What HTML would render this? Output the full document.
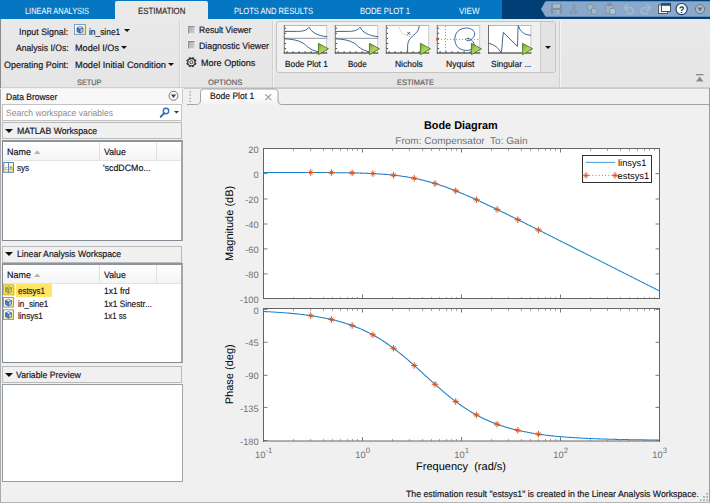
<!DOCTYPE html>
<html lang="en"><head><meta charset="utf-8"><title>Linear Analysis Tool - Bode Plot 1</title>
<style>
html,body{margin:0;padding:0;background:#f0f0f0;}
body{width:710px;height:503px;overflow:hidden;font-family:"Liberation Sans",Arial,sans-serif;}
#root{text-rendering:geometricPrecision;position:relative;width:710px;height:503px;overflow:hidden;background:#f0f0f0;}
#root div,#root svg,#root span{position:absolute;box-sizing:border-box;}
.t{white-space:nowrap;display:block;transform-origin:0 50%;-webkit-text-stroke:0.17px currentColor;}
/* ---- toolstrip tab bar ---- */
#tabbar{left:0;top:0;width:710px;height:19px;background:#0576c1;}
#tabdark{left:502px;top:0;width:208px;height:19px;background:#003e75;}
#tabactive{left:115px;top:1px;width:93px;height:19px;background:#e9e9e9;border-radius:2px 2px 0 0;}
/* ---- toolstrip body ---- */
#strip{left:0;top:19px;width:710px;height:69px;background:linear-gradient(#e9e9e9,#e5e5e5);border-bottom:1px solid #cfcfcf;box-shadow:0 1px 0 #cbcbcb;}
#stripedge{left:0;top:19px;width:1px;height:69px;background:#8a8a8a;}
.vsep{width:1px;top:21px;height:66px;background:#d0d0d0;box-shadow:1px 0 0 #f6f6f6;}
#gallery{left:276px;top:21px;width:280px;height:51.5px;border:1px solid #c4c4c4;border-radius:3px;background:#f0f0f0;}
#gallerydd{left:540px;top:22px;width:15px;height:49.5px;background:#e3e3e3;border-left:1px solid #cdcdcd;border-radius:0 2px 2px 0;}
.chk{width:7.6px;height:7.6px;background:linear-gradient(135deg,#b0b0b0,#cfcfcf);border-top:1px solid #8b8b8b;border-left:1px solid #909090;border-right:1px solid #d9d9d9;border-bottom:1px solid #dedede;box-shadow:0 0 0 0.6px #f2f2f2;}
.arrow{width:0;height:0;border-left:3px solid transparent;border-right:3px solid transparent;border-top:3px solid #111;}
/* ---- data browser ---- */
#browser{left:0;top:88px;width:184px;height:415px;background:#f0f0f0;}
#dbhead{left:1px;top:88.6px;width:181.5px;height:15px;background:#f8f8f8;border-right:1px solid #c9c9c9;}
#search{left:2px;top:103.6px;width:180px;height:17.6px;background:#fff;border:1px solid #c3c3c3;}
.sechead{left:2px;width:180px;height:17px;background:#f0f0f0;border:1px solid #b9b9b9;}
.tri{width:0;height:0;border-left:4.5px solid transparent;border-right:4.5px solid transparent;border-top:4.5px solid #111;}
.panel{left:2px;width:181px;background:#fff;border:1px solid #828a94;border-top:2px solid #8e949c;border-right:2px solid #a2a6ac;}
.colhead{left:0;top:0;width:178px;height:19px;background:linear-gradient(#ffffff,#f4f4f4);border-bottom:1px solid #e3e3e3;}
.colsep{top:0;width:1px;height:19px;background:#e0e0e0;}
.sorttri{width:0;height:0;border-left:3.5px solid transparent;border-right:3.5px solid transparent;border-bottom:3.5px solid #a8a8a8;}
/* ---- document area ---- */
#docright{left:709px;top:88px;width:1px;height:415px;background:#9c9c9c;}
#leftedge{left:0;top:89px;width:1px;height:414px;background:#aaaaaa;}
#bottomedge{left:0;top:502px;width:710px;height:1px;background:#b4b4b4;}

</style></head><body>
<div id="root">
<!-- toolstrip tab bar -->
<div id="tabbar"></div>
<div id="tabdark"></div>
<div id="tabactive"></div>
<!-- toolstrip body -->
<div id="strip"></div>
<div id="stripedge"></div>
<div class="vsep" style="left:179px"></div>
<div class="vsep" style="left:272px"></div>
<div class="vsep" style="left:559px"></div>
<div id="gallery"></div>
<div id="gallerydd"></div>
<div class="arrow" style="left:123.5px;top:29px"></div>
<div class="arrow" style="left:121px;top:45.5px"></div>
<div class="arrow" style="left:168px;top:63px"></div>
<div class="arrow" style="left:545px;top:45.5px"></div>
<div class="chk" style="left:187.6px;top:26.3px"></div>
<div class="chk" style="left:187.6px;top:41.1px"></div>
<!-- data browser -->
<div id="browser"></div>
<div id="leftedge"></div>
<div id="dbhead"></div>
<div id="search"></div>
<div class="sechead" style="top:122px"></div>
<div class="tri" style="left:5px;top:129px"></div>
<div class="panel" style="top:140px;height:101px">
  <div class="colhead"></div><div class="colsep" style="left:96.3px"></div><div class="colsep" style="left:152.5px"></div>
</div>
<div class="sechead" style="top:245.5px"></div>
<div class="tri" style="left:5px;top:252px"></div>
<div class="panel" style="top:263px;height:100px">
  <div class="colhead"></div><div class="colsep" style="left:96.3px"></div><div class="colsep" style="left:152.5px"></div>
  <div style="left:0.5px;top:19.5px;width:11px;height:11px;background:#ffe566"></div>
  <div style="left:13.2px;top:19.3px;width:35.8px;height:12.4px;background:#ffe566"></div>
</div>
<div class="sechead" style="top:366px"></div>
<div class="tri" style="left:5px;top:373px"></div>
<div class="panel" style="top:384px;height:98px;border:1px solid #969ca4;border-right:1px solid #a2a6ac"></div>
<!-- document area -->
<div id="docright"></div>
<div id="bottomedge"></div>

<svg id="icons" width="710" height="503" viewBox="0 0 710 503" style="left:0;top:0" font-family="'Liberation Sans', Arial, sans-serif">
<defs>
<linearGradient id="gy" x1="0" y1="0" x2="1" y2="1"><stop offset="0" stop-color="#ffffff"/><stop offset="0.4" stop-color="#fff9d6"/><stop offset="1" stop-color="#ffdc55"/></linearGradient>
<linearGradient id="gplay" x1="0" y1="0" x2="1" y2="1"><stop offset="0" stop-color="#6f9f2a"/><stop offset="0.5" stop-color="#b4d465"/><stop offset="1" stop-color="#8dbb3c"/></linearGradient>
<linearGradient id="gchk" x1="0" y1="0" x2="1" y2="1"><stop offset="0" stop-color="#b4b4b4"/><stop offset="1" stop-color="#d8d8d8"/></linearGradient>
</defs>
<g id="qab">
<path d="M541 9L545.5 1.3H710V16.7H545.5Z" fill="#8aa8c9"/>
<g fill="#8292a3"><rect x="551" y="3.5" width="11" height="10.5" rx="0.8"/><rect x="553" y="4.3" width="7" height="3.6" fill="#a9bccf"/><rect x="553.3" y="10" width="6.4" height="4" fill="#9fb3c8"/><rect x="554.3" y="10.8" width="1.6" height="2.4" fill="#8292a3"/></g>
<g stroke="#8292a3" stroke-width="1" fill="none"><path d="M576.5 4L571.5 11.5M573 4L575.5 11"/><circle cx="571" cy="12.6" r="1.4"/><circle cx="576" cy="12.6" r="1.4"/></g>
<g fill="#a4b7cb" stroke="#8292a3" stroke-width="0.9"><path d="M587.5 4.5h4.2l1.3 1.3v4.2h-5.5z"/><path d="M591.5 8.5h4.2l1.3 1.3v4.2h-5.5z"/></g>
<g fill="#9db0c5" stroke="#8292a3" stroke-width="0.9"><rect x="605.5" y="4.8" width="8" height="8.7" rx="0.8"/><rect x="607.7" y="3.6" width="3.6" height="2.2" fill="#8292a3"/><path d="M610 8.5h4.2l1.3 1.3v4.4h-5.5z" fill="#b4c4d6"/></g>
<g fill="none" stroke="#a5b8cc" stroke-width="1.6" stroke-linecap="round" stroke-linejoin="round"><path d="M627.5 4.5L624 7.7L627.5 10.8M624.3 7.7H630.5a3 3 0 0 1 0 6H627"/><path d="M647 4.5L650.5 7.7L647 10.8M650.2 7.7H644a3 3 0 0 0 0 6H647.5"/></g>
<g><rect x="658.5" y="5" width="9" height="8.5" fill="#eeeeee" stroke="#4d4d4d" stroke-width="0.9"/><rect x="661.5" y="3.5" width="9" height="8" fill="#fafafa" stroke="#3c3c3c" stroke-width="0.9"/><rect x="661.9" y="3.9" width="8.2" height="1.9" fill="#1f4e8c"/></g>
<g><circle cx="681.6" cy="9.1" r="5.6" fill="#ffffff" stroke="#1d3f73" stroke-width="1.2"/><text x="681.6" y="12.6" font-size="9.5" font-weight="bold" fill="#16305c" text-anchor="middle">?</text></g>
<g><circle cx="700" cy="9.1" r="4.6" fill="#a9bdd2" stroke="#6d7781" stroke-width="1"/><path d="M697.3 7.6h5.4L700 11.6z" fill="#666e77"/></g>
</g>
<rect x="74.50" y="24.60" width="11.00" height="9.80" fill="url(#gy)" stroke="#6b94cb" stroke-width="0.9"/><path d="M77.00 27.80l3 -1.3l3 1.3l-3 1.4z" fill="#f6faff" stroke="#2c57a4" stroke-width="0.7" stroke-linejoin="round"/><path d="M77.00 27.80l3 1.4v3.9l-3 -1.4z" fill="#4d7ccb" stroke="#2c57a4" stroke-width="0.7" stroke-linejoin="round"/><path d="M80.00 29.20l3 -1.4v3.9l-3 1.4z" fill="#a9c9f5" stroke="#2c57a4" stroke-width="0.7" stroke-linejoin="round"/>
<path d="M195.00 63.69L196.16 64.17M192.89 65.80L193.37 66.96M189.91 65.80L189.43 66.96M187.80 63.69L186.64 64.17M187.80 60.71L186.64 60.23M189.91 58.60L189.43 57.44M192.89 58.60L193.37 57.44M195.00 60.71L196.16 60.23" stroke="#303030" stroke-width="1.9" fill="none"/><circle cx="191.40" cy="62.20" r="3.7" fill="#f6f6f6" stroke="#2c2c2c" stroke-width="1.3"/><circle cx="191.40" cy="62.20" r="1.6" fill="#dcdcdc" stroke="#3a3a3a" stroke-width="0.9"/>
<g fill="#8a8a8a"><rect x="696" y="74" width="7.5" height="1.3"/><path d="M696 81.5h7.5L699.75 76.6z"/></g>
<rect x="283.80" y="25.00" width="43.40" height="28.40" fill="#fff"/><path d="M283.80 25.50H327.20" stroke="#b8b8b8" stroke-width="1"/><path d="M326.70 25.00V53.40" stroke="#c8c8c8" stroke-width="1"/><path d="M284.30 25.00V53.40" stroke="#6e6e6e" stroke-width="1"/><path d="M283.80 53.00H327.20" stroke="#1a1a1a" stroke-width="1.2"/><path d="M287.10 52.80v-1.6M293.10 52.80v-1.6M299.10 52.80v-1.6M305.10 52.80v-1.6M311.10 52.80v-1.6M317.10 52.80v-1.6M323.10 52.80v-1.6M284.60 28.20h1.5M284.60 33.30h1.5M284.60 38.40h1.5M284.60 43.50h1.5M284.60 48.60h1.5" stroke="#333" stroke-width="0.9"/>
<path d="M283.80 38.3H327.20" stroke="#8a8a8a" stroke-width="0.9"/>
<path d="M284.40 31.4h12c6 0 10 -0.6 12.7 -4.2c2 4.6 8 8.8 18.2 9.4" fill="none" stroke="#3e6491" stroke-width="1" />
<path d="M284.40 38.8c8 0.4 14 1.4 18.5 4.2c5 3.4 7 7.2 15 8.6" fill="none" stroke="#3e6491" stroke-width="1" />
<path d="M318.40 43.30v11.4l10 -5.9z" fill="url(#gplay)" stroke="#4a7a1e" stroke-width="0.9" stroke-linejoin="round"/>
<rect x="334.80" y="25.00" width="43.40" height="28.40" fill="#fff"/><path d="M334.80 25.50H378.20" stroke="#b8b8b8" stroke-width="1"/><path d="M377.70 25.00V53.40" stroke="#c8c8c8" stroke-width="1"/><path d="M335.30 25.00V53.40" stroke="#6e6e6e" stroke-width="1"/><path d="M334.80 53.00H378.20" stroke="#1a1a1a" stroke-width="1.2"/><path d="M338.10 52.80v-1.6M344.10 52.80v-1.6M350.10 52.80v-1.6M356.10 52.80v-1.6M362.10 52.80v-1.6M368.10 52.80v-1.6M374.10 52.80v-1.6M335.60 28.20h1.5M335.60 33.30h1.5M335.60 38.40h1.5M335.60 43.50h1.5M335.60 48.60h1.5" stroke="#333" stroke-width="0.9"/>
<path d="M334.80 38.3H378.20" stroke="#8a8a8a" stroke-width="0.9"/>
<path d="M335.40 31.4h12c6 0 10 -0.6 12.7 -4.2c2 4.6 8 8.8 18.2 9.4" fill="none" stroke="#3e6491" stroke-width="1" />
<path d="M335.40 38.8c8 0.4 14 1.4 18.5 4.2c5 3.4 7 7.2 15 8.6" fill="none" stroke="#3e6491" stroke-width="1" />
<path d="M369.40 43.30v11.4l10 -5.9z" fill="url(#gplay)" stroke="#4a7a1e" stroke-width="0.9" stroke-linejoin="round"/>
<rect x="385.80" y="25.00" width="43.40" height="28.40" fill="#fff"/><path d="M385.80 25.50H429.20" stroke="#b8b8b8" stroke-width="1"/><path d="M428.70 25.00V53.40" stroke="#c8c8c8" stroke-width="1"/><path d="M386.30 25.00V53.40" stroke="#6e6e6e" stroke-width="1"/><path d="M385.80 53.00H429.20" stroke="#1a1a1a" stroke-width="1.2"/><path d="M389.10 52.80v-1.6M395.10 52.80v-1.6M401.10 52.80v-1.6M407.10 52.80v-1.6M413.10 52.80v-1.6M419.10 52.80v-1.6M425.10 52.80v-1.6M386.60 28.20h1.5M386.60 33.30h1.5M386.60 38.40h1.5M386.60 43.50h1.5M386.60 48.60h1.5" stroke="#333" stroke-width="0.9"/>
<path d="M399 27.5c1.2 5 6 9 13 9.2" fill="none" stroke="#9a9a9a" stroke-width="0.9" stroke-dasharray="1.2 1.6"/>
<path d="M407.3 31.9l2.9 2.9M410.2 31.9l-2.9 2.9" stroke="#2d4f7c" stroke-width="0.9"/>
<path d="M419.2 25.8c0 9 -11.6 10 -11.6 20v6.6" fill="none" stroke="#3e6491" stroke-width="1" />
<path d="M420.40 43.30v11.4l10 -5.9z" fill="url(#gplay)" stroke="#4a7a1e" stroke-width="0.9" stroke-linejoin="round"/>
<rect x="436.80" y="25.00" width="43.40" height="28.40" fill="#fff"/><path d="M436.80 25.50H480.20" stroke="#b8b8b8" stroke-width="1"/><path d="M479.70 25.00V53.40" stroke="#c8c8c8" stroke-width="1"/><path d="M437.30 25.00V53.40" stroke="#6e6e6e" stroke-width="1"/><path d="M436.80 53.00H480.20" stroke="#1a1a1a" stroke-width="1.2"/><path d="M440.10 52.80v-1.6M446.10 52.80v-1.6M452.10 52.80v-1.6M458.10 52.80v-1.6M464.10 52.80v-1.6M470.10 52.80v-1.6M476.10 52.80v-1.6M437.60 28.20h1.5M437.60 33.30h1.5M437.60 38.40h1.5M437.60 43.50h1.5M437.60 48.60h1.5" stroke="#333" stroke-width="0.9"/>
<path d="M445.5 26V52M438 39.4H479.5" stroke="#8c8c8c" stroke-width="0.9" stroke-dasharray="1.1 1.9"/>
<path d="M436.6 38.3l2 1.1l-2 1.1z" fill="#e8420a" stroke="#e8420a" stroke-width="0.6"/>
<path d="M471 39.6c-1.6 -1.7 -4.6 -1.7 -5.2 -0.1c0.6 1.6 4 1.6 5.6 0c3 -2.6 4.8 -6 1.6 -9.2c-3.6 -3.4 -11.4 -3 -15.6 1.4c-3.4 3.8 -3.4 11.2 0 15c4.2 4.6 12.2 4.8 15.6 1.4c2 -2 2 -5.2 -2 -8.5" fill="none" stroke="#3e6491" stroke-width="1" />
<path d="M471.40 43.30v11.4l10 -5.9z" fill="url(#gplay)" stroke="#4a7a1e" stroke-width="0.9" stroke-linejoin="round"/>
<rect x="488.00" y="25.00" width="43.40" height="28.40" fill="#fff"/><path d="M488.00 25.50H531.40" stroke="#b8b8b8" stroke-width="1"/><path d="M530.90 25.00V53.40" stroke="#c8c8c8" stroke-width="1"/><path d="M488.50 25.00V53.40" stroke="#6e6e6e" stroke-width="1"/><path d="M488.00 53.00H531.40" stroke="#1a1a1a" stroke-width="1.2"/>
<path d="M488.6 43.1c6 1.6 10 4.8 12.5 9.7c1.4 -6 1.2 -15 2.3 -20.4l14 14.1c0.6 -8 0.2 -15 0.9 -20.9c2 6.4 6.4 9.6 12.8 9.6" fill="none" stroke="#3e6491" stroke-width="1" />
<path d="M522.60 43.30v11.4l10 -5.9z" fill="url(#gplay)" stroke="#4a7a1e" stroke-width="0.9" stroke-linejoin="round"/>
<g><circle cx="173.5" cy="95.8" r="4.5" fill="#fafafa" stroke="#6a6a6a" stroke-width="0.9"/><path d="M170.9 94.4h5.2l-2.6 3.6z" fill="#444"/></g>
<g><circle cx="166" cy="111" r="2.7" fill="#fff" stroke="#2f6fc4" stroke-width="1.4"/><path d="M164 113.3L160.6 116.8" stroke="#2a5ba8" stroke-width="1.7" stroke-linecap="round"/></g>
<path d="M174 111h5l-2.5 2.6z" fill="#333"/>
<path d="M34 154h6.6l-3.3 -3.6z" fill="#b2b2b2"/>
<path d="M34 277h6.6l-3.3 -3.6z" fill="#b2b2b2"/>
<g><rect x="3.7" y="162.5" width="9.8" height="9.8" fill="url(#gy)" stroke="#5b86bf" stroke-width="1"/><path d="M8.5 162.5v9.8" stroke="#5b86bf" stroke-width="1"/><text x="4.5" y="170" font-size="5.5" fill="#777">c</text><text x="9.4" y="170" font-size="5.5" fill="#555">h</text></g>
<rect x="3.50" y="284.70" width="10.00" height="9.60" fill="#f7dc52" stroke="#d9b93a" stroke-width="1"/><path d="M5.50 287.80l3 -1.3l3 1.3l-3 1.4z" fill="#cfd06e" stroke="#8f8c3a" stroke-width="0.7" stroke-linejoin="round"/><path d="M5.50 287.80l3 1.4v3.9l-3 -1.4z" fill="#b9b04c" stroke="#8f8c3a" stroke-width="0.7" stroke-linejoin="round"/><path d="M8.50 289.20l3 -1.4v3.9l-3 1.4z" fill="#d6c95e" stroke="#8f8c3a" stroke-width="0.7" stroke-linejoin="round"/>
<rect x="3.50" y="297.50" width="10.00" height="9.60" fill="url(#gy)" stroke="#6b94cb" stroke-width="0.9"/><path d="M5.50 300.60l3 -1.3l3 1.3l-3 1.4z" fill="#f6faff" stroke="#2c57a4" stroke-width="0.7" stroke-linejoin="round"/><path d="M5.50 300.60l3 1.4v3.9l-3 -1.4z" fill="#4d7ccb" stroke="#2c57a4" stroke-width="0.7" stroke-linejoin="round"/><path d="M8.50 302.00l3 -1.4v3.9l-3 1.4z" fill="#a9c9f5" stroke="#2c57a4" stroke-width="0.7" stroke-linejoin="round"/>
<rect x="3.50" y="309.80" width="10.00" height="9.60" fill="url(#gy)" stroke="#6b94cb" stroke-width="0.9"/><path d="M5.50 312.90l3 -1.3l3 1.3l-3 1.4z" fill="#f6faff" stroke="#2c57a4" stroke-width="0.7" stroke-linejoin="round"/><path d="M5.50 312.90l3 1.4v3.9l-3 -1.4z" fill="#4d7ccb" stroke="#2c57a4" stroke-width="0.7" stroke-linejoin="round"/><path d="M8.50 314.30l3 -1.4v3.9l-3 1.4z" fill="#a9c9f5" stroke="#2c57a4" stroke-width="0.7" stroke-linejoin="round"/>
<defs><linearGradient id="gtab" x1="0" y1="0" x2="0" y2="1"><stop offset="0" stop-color="#ffffff"/><stop offset="0.35" stop-color="#ffffff"/><stop offset="1" stop-color="#f0f0f0"/></linearGradient></defs>
<path d="M196.5 104.5C199.6 104.5 200.5 103 200.5 100V92.5C200.5 90 202 89 204.5 89H274C276.5 89 278 90 278 92.5V100C278 103 279 104.5 282 104.5V106H196.5Z" fill="url(#gtab)"/>
<path d="M187 104.5H196.5C199.6 104.5 200.5 103 200.5 100V92.5C200.5 90 202 89 204.5 89H274C276.5 89 278 90 278 92.5V100C278 103 279 104.5 282 104.5H709" fill="none" stroke="#a3a3a3" stroke-width="1"/>
<rect x="196" y="105" width="87" height="1.2" fill="#f0f0f0"/>
<path d="M190.2 91.5v10.2" stroke="#a6a6a6" stroke-width="2.1" stroke-dasharray="1 2.1"/>
<path d="M265.4 94.3l5.8 5.8M271.2 94.3l-5.8 5.8" stroke="#a6a6a6" stroke-width="1.3"/>
<g fill="#b9b5a6"><rect x="706.2" y="499.2" width="2" height="2"/><rect x="703" y="499.2" width="2" height="2"/><rect x="699.8" y="499.2" width="2" height="2"/><rect x="706.2" y="496" width="2" height="2"/><rect x="703" y="496" width="2" height="2"/><rect x="706.2" y="492.8" width="2" height="2"/></g>
</svg>
<svg id="plot" width="710" height="503" viewBox="0 0 710 503" style="left:0;top:0" font-family="'Liberation Sans', Arial, sans-serif">
<rect x="263.5" y="148.5" width="396.0" height="150.0" fill="#fff"/>
<rect x="263.5" y="308.5" width="396.0" height="132.5" fill="#fff"/>
<clipPath id="ctop"><rect x="263.5" y="148.5" width="396.0" height="150.0"/></clipPath>
<clipPath id="cbot"><rect x="263.5" y="308.5" width="396.0" height="132.5"/></clipPath>
<polyline clip-path="url(#ctop)" points="263.50,172.46 264.82,172.47 266.14,172.47 267.46,172.47 268.78,172.47 270.10,172.47 271.42,172.47 272.74,172.47 274.06,172.47 275.38,172.47 276.70,172.47 278.02,172.47 279.34,172.47 280.66,172.47 281.98,172.48 283.30,172.48 284.62,172.48 285.94,172.48 287.26,172.48 288.58,172.48 289.90,172.48 291.22,172.48 292.54,172.49 293.86,172.49 295.18,172.49 296.50,172.49 297.82,172.49 299.14,172.50 300.46,172.50 301.78,172.50 303.10,172.50 304.42,172.51 305.74,172.51 307.06,172.51 308.38,172.52 309.70,172.52 311.02,172.53 312.34,172.53 313.66,172.53 314.98,172.54 316.30,172.54 317.62,172.55 318.94,172.56 320.26,172.56 321.58,172.57 322.90,172.58 324.22,172.58 325.54,172.59 326.86,172.60 328.18,172.61 329.50,172.62 330.82,172.63 332.14,172.64 333.46,172.65 334.78,172.66 336.10,172.67 337.42,172.69 338.74,172.70 340.06,172.72 341.38,172.73 342.70,172.75 344.02,172.77 345.34,172.79 346.66,172.81 347.98,172.83 349.30,172.85 350.62,172.88 351.94,172.91 353.26,172.93 354.58,172.96 355.90,172.99 357.22,173.03 358.54,173.06 359.86,173.10 361.18,173.14 362.50,173.18 363.82,173.22 365.14,173.27 366.46,173.32 367.78,173.37 369.10,173.42 370.42,173.48 371.74,173.54 373.06,173.60 374.38,173.67 375.70,173.74 377.02,173.82 378.34,173.90 379.66,173.98 380.98,174.07 382.30,174.16 383.62,174.25 384.94,174.36 386.26,174.46 387.58,174.58 388.90,174.69 390.22,174.82 391.54,174.95 392.86,175.08 394.18,175.22 395.50,175.37 396.82,175.52 398.14,175.69 399.46,175.85 400.78,176.03 402.10,176.21 403.42,176.40 404.74,176.60 406.06,176.81 407.38,177.02 408.70,177.25 410.02,177.48 411.34,177.72 412.66,177.96 413.98,178.22 415.30,178.48 416.62,178.76 417.94,179.04 419.26,179.33 420.58,179.63 421.90,179.94 423.22,180.26 424.54,180.59 425.86,180.93 427.18,181.27 428.50,181.63 429.82,181.99 431.14,182.36 432.46,182.75 433.78,183.14 435.10,183.54 436.42,183.94 437.74,184.36 439.06,184.79 440.38,185.22 441.70,185.66 443.02,186.11 444.34,186.57 445.66,187.04 446.98,187.51 448.30,187.99 449.62,188.48 450.94,188.98 452.26,189.48 453.58,189.99 454.90,190.51 456.22,191.03 457.54,191.56 458.86,192.10 460.18,192.64 461.50,193.19 462.82,193.74 464.14,194.30 465.46,194.86 466.78,195.43 468.10,196.00 469.42,196.58 470.74,197.16 472.06,197.75 473.38,198.34 474.70,198.93 476.02,199.53 477.34,200.13 478.66,200.74 479.98,201.35 481.30,201.96 482.62,202.57 483.94,203.19 485.26,203.81 486.58,204.43 487.90,205.06 489.22,205.68 490.54,206.31 491.86,206.94 493.18,207.57 494.50,208.21 495.82,208.85 497.14,209.48 498.46,210.12 499.78,210.76 501.10,211.41 502.42,212.05 503.74,212.70 505.06,213.34 506.38,213.99 507.70,214.64 509.02,215.29 510.34,215.94 511.66,216.59 512.98,217.24 514.30,217.89 515.62,218.55 516.94,219.20 518.26,219.86 519.58,220.51 520.90,221.17 522.22,221.83 523.54,222.48 524.86,223.14 526.18,223.80 527.50,224.46 528.82,225.12 530.14,225.78 531.46,226.44 532.78,227.10 534.10,227.76 535.42,228.42 536.74,229.08 538.06,229.74 539.38,230.40 540.70,231.07 542.02,231.73 543.34,232.39 544.66,233.05 545.98,233.72 547.30,234.38 548.62,235.04 549.94,235.71 551.26,236.37 552.58,237.03 553.90,237.70 555.22,238.36 556.54,239.02 557.86,239.69 559.18,240.35 560.50,241.02 561.82,241.68 563.14,242.35 564.46,243.01 565.78,243.68 567.10,244.34 568.42,245.01 569.74,245.67 571.06,246.34 572.38,247.00 573.70,247.67 575.02,248.33 576.34,249.00 577.66,249.66 578.98,250.33 580.30,250.99 581.62,251.66 582.94,252.32 584.26,252.99 585.58,253.65 586.90,254.32 588.22,254.98 589.54,255.65 590.86,256.31 592.18,256.98 593.50,257.65 594.82,258.31 596.14,258.98 597.46,259.64 598.78,260.31 600.10,260.97 601.42,261.64 602.74,262.30 604.06,262.97 605.38,263.64 606.70,264.30 608.02,264.97 609.34,265.63 610.66,266.30 611.98,266.96 613.30,267.63 614.62,268.30 615.94,268.96 617.26,269.63 618.58,270.29 619.90,270.96 621.22,271.62 622.54,272.29 623.86,272.96 625.18,273.62 626.50,274.29 627.82,274.95 629.14,275.62 630.46,276.29 631.78,276.95 633.10,277.62 634.42,278.28 635.74,278.95 637.06,279.61 638.38,280.28 639.70,280.95 641.02,281.61 642.34,282.28 643.66,282.94 644.98,283.61 646.30,284.28 647.62,284.94 648.94,285.61 650.26,286.27 651.58,286.94 652.90,287.60 654.22,288.27 655.54,288.94 656.86,289.60 658.18,290.27 659.50,290.93" fill="none" stroke="#1583d0" stroke-width="1.05"/>
<polyline clip-path="url(#cbot)" points="263.50,311.48 264.82,311.55 266.14,311.62 267.46,311.69 268.78,311.76 270.10,311.83 271.42,311.91 272.74,311.98 274.06,312.06 275.38,312.15 276.70,312.23 278.02,312.32 279.34,312.41 280.66,312.51 281.98,312.60 283.30,312.70 284.62,312.80 285.94,312.91 287.26,313.02 288.58,313.13 289.90,313.25 291.22,313.37 292.54,313.49 293.86,313.62 295.18,313.75 296.50,313.89 297.82,314.03 299.14,314.17 300.46,314.32 301.78,314.47 303.10,314.63 304.42,314.79 305.74,314.96 307.06,315.13 308.38,315.31 309.70,315.49 311.02,315.68 312.34,315.88 313.66,316.08 314.98,316.28 316.30,316.50 317.62,316.72 318.94,316.94 320.26,317.18 321.58,317.42 322.90,317.66 324.22,317.92 325.54,318.18 326.86,318.45 328.18,318.73 329.50,319.02 330.82,319.32 332.14,319.62 333.46,319.94 334.78,320.26 336.10,320.59 337.42,320.94 338.74,321.29 340.06,321.65 341.38,322.03 342.70,322.41 344.02,322.81 345.34,323.22 346.66,323.64 347.98,324.07 349.30,324.51 350.62,324.97 351.94,325.44 353.26,325.92 354.58,326.42 355.90,326.93 357.22,327.46 358.54,328.00 359.86,328.55 361.18,329.12 362.50,329.70 363.82,330.30 365.14,330.92 366.46,331.55 367.78,332.20 369.10,332.86 370.42,333.54 371.74,334.24 373.06,334.95 374.38,335.68 375.70,336.43 377.02,337.20 378.34,337.98 379.66,338.78 380.98,339.60 382.30,340.44 383.62,341.29 384.94,342.16 386.26,343.05 387.58,343.95 388.90,344.88 390.22,345.82 391.54,346.78 392.86,347.75 394.18,348.74 395.50,349.74 396.82,350.77 398.14,351.80 399.46,352.85 400.78,353.92 402.10,355.00 403.42,356.09 404.74,357.20 406.06,358.31 407.38,359.44 408.70,360.58 410.02,361.73 411.34,362.89 412.66,364.06 413.98,365.23 415.30,366.42 416.62,367.60 417.94,368.80 419.26,369.99 420.58,371.20 421.90,372.40 423.22,373.61 424.54,374.81 425.86,376.02 427.18,377.23 428.50,378.43 429.82,379.63 431.14,380.83 432.46,382.02 433.78,383.21 435.10,384.40 436.42,385.57 437.74,386.74 439.06,387.90 440.38,389.05 441.70,390.19 443.02,391.32 444.34,392.44 445.66,393.55 446.98,394.64 448.30,395.72 449.62,396.79 450.94,397.85 452.26,398.88 453.58,399.91 454.90,400.92 456.22,401.91 457.54,402.88 458.86,403.84 460.18,404.79 461.50,405.71 462.82,406.62 464.14,407.51 465.46,408.39 466.78,409.24 468.10,410.08 469.42,410.90 470.74,411.70 472.06,412.49 473.38,413.26 474.70,414.01 476.02,414.74 477.34,415.46 478.66,416.16 479.98,416.84 481.30,417.51 482.62,418.16 483.94,418.79 485.26,419.41 486.58,420.01 487.90,420.60 489.22,421.17 490.54,421.72 491.86,422.27 493.18,422.79 494.50,423.31 495.82,423.80 497.14,424.29 498.46,424.76 499.78,425.22 501.10,425.67 502.42,426.10 503.74,426.52 505.06,426.93 506.38,427.33 507.70,427.72 509.02,428.09 510.34,428.46 511.66,428.81 512.98,429.16 514.30,429.49 515.62,429.82 516.94,430.13 518.26,430.44 519.58,430.74 520.90,431.03 522.22,431.31 523.54,431.58 524.86,431.84 526.18,432.10 527.50,432.35 528.82,432.59 530.14,432.82 531.46,433.05 532.78,433.27 534.10,433.49 535.42,433.69 536.74,433.90 538.06,434.09 539.38,434.28 540.70,434.47 542.02,434.64 543.34,434.82 544.66,434.99 545.98,435.15 547.30,435.31 548.62,435.46 549.94,435.61 551.26,435.75 552.58,435.89 553.90,436.03 555.22,436.16 556.54,436.29 557.86,436.41 559.18,436.53 560.50,436.65 561.82,436.76 563.14,436.87 564.46,436.98 565.78,437.08 567.10,437.18 568.42,437.28 569.74,437.38 571.06,437.47 572.38,437.56 573.70,437.64 575.02,437.72 576.34,437.81 577.66,437.88 578.98,437.96 580.30,438.03 581.62,438.10 582.94,438.17 584.26,438.24 585.58,438.31 586.90,438.37 588.22,438.43 589.54,438.49 590.86,438.55 592.18,438.60 593.50,438.66 594.82,438.71 596.14,438.76 597.46,438.81 598.78,438.86 600.10,438.91 601.42,438.95 602.74,439.00 604.06,439.04 605.38,439.08 606.70,439.12 608.02,439.16 609.34,439.20 610.66,439.23 611.98,439.27 613.30,439.30 614.62,439.33 615.94,439.37 617.26,439.40 618.58,439.43 619.90,439.46 621.22,439.49 622.54,439.51 623.86,439.54 625.18,439.57 626.50,439.59 627.82,439.62 629.14,439.64 630.46,439.66 631.78,439.69 633.10,439.71 634.42,439.73 635.74,439.75 637.06,439.77 638.38,439.79 639.70,439.81 641.02,439.82 642.34,439.84 643.66,439.86 644.98,439.87 646.30,439.89 647.62,439.91 648.94,439.92 650.26,439.94 651.58,439.95 652.90,439.96 654.22,439.98 655.54,439.99 656.86,440.00 658.18,440.01 659.50,440.03" fill="none" stroke="#1583d0" stroke-width="1.05"/>
<polyline points="310.74,172.52 331.44,172.63 352.15,172.91 372.86,173.59 393.57,175.16 414.28,178.28 434.99,183.50 455.70,190.83 476.41,199.71 497.12,209.47 517.83,219.64 538.54,229.98" fill="none" stroke="#d95319" stroke-width="0.9" stroke-dasharray="0.9 2.4" opacity="0.5"/>
<polyline points="310.74,315.64 331.44,319.46 352.15,325.52 372.86,334.84 393.57,348.28 414.28,365.50 434.99,384.30 455.70,401.52 476.41,414.96 497.12,424.28 517.83,430.34 538.54,434.16" fill="none" stroke="#d95319" stroke-width="0.9" stroke-dasharray="0.9 2.4" opacity="0.5"/>
<path d="M307.44 172.52L314.04 172.52M308.87 170.66L312.60 174.39M310.74 169.22L310.74 175.82M312.60 170.66L308.87 174.39" stroke="#d95319" stroke-width="0.95" fill="none"/>
<path d="M307.44 315.64L314.04 315.64M308.87 313.77L312.60 317.51M310.74 312.34L310.74 318.94M312.60 313.77L308.87 317.51" stroke="#d95319" stroke-width="0.95" fill="none"/>
<path d="M328.14 172.63L334.74 172.63M329.58 170.77L333.31 174.50M331.44 169.33L331.44 175.93M333.31 170.77L329.58 174.50" stroke="#d95319" stroke-width="0.95" fill="none"/>
<path d="M328.14 319.46L334.74 319.46M329.58 317.59L333.31 321.33M331.44 316.16L331.44 322.76M333.31 317.59L329.58 321.33" stroke="#d95319" stroke-width="0.95" fill="none"/>
<path d="M348.85 172.91L355.45 172.91M350.29 171.04L354.02 174.78M352.15 169.61L352.15 176.21M354.02 171.04L350.29 174.78" stroke="#d95319" stroke-width="0.95" fill="none"/>
<path d="M348.85 325.52L355.45 325.52M350.29 323.65L354.02 327.39M352.15 322.22L352.15 328.82M354.02 323.65L350.29 327.39" stroke="#d95319" stroke-width="0.95" fill="none"/>
<path d="M369.56 173.59L376.16 173.59M371.00 171.73L374.73 175.46M372.86 170.29L372.86 176.89M374.73 171.73L371.00 175.46" stroke="#d95319" stroke-width="0.95" fill="none"/>
<path d="M369.56 334.84L376.16 334.84M371.00 332.98L374.73 336.71M372.86 331.54L372.86 338.14M374.73 332.98L371.00 336.71" stroke="#d95319" stroke-width="0.95" fill="none"/>
<path d="M390.27 175.16L396.87 175.16M391.71 173.29L395.44 177.02M393.57 171.86L393.57 178.46M395.44 173.29L391.71 177.02" stroke="#d95319" stroke-width="0.95" fill="none"/>
<path d="M390.27 348.28L396.87 348.28M391.71 346.41L395.44 350.15M393.57 344.98L393.57 351.58M395.44 346.41L391.71 350.15" stroke="#d95319" stroke-width="0.95" fill="none"/>
<path d="M410.98 178.28L417.58 178.28M412.41 176.41L416.15 180.15M414.28 174.98L414.28 181.58M416.15 176.41L412.41 180.15" stroke="#d95319" stroke-width="0.95" fill="none"/>
<path d="M410.98 365.50L417.58 365.50M412.41 363.64L416.15 367.37M414.28 362.20L414.28 368.80M416.15 363.64L412.41 367.37" stroke="#d95319" stroke-width="0.95" fill="none"/>
<path d="M431.69 183.50L438.29 183.50M433.12 181.64L436.86 185.37M434.99 180.20L434.99 186.80M436.86 181.64L433.12 185.37" stroke="#d95319" stroke-width="0.95" fill="none"/>
<path d="M431.69 384.30L438.29 384.30M433.12 382.43L436.86 386.16M434.99 381.00L434.99 387.60M436.86 382.43L433.12 386.16" stroke="#d95319" stroke-width="0.95" fill="none"/>
<path d="M452.40 190.83L459.00 190.83M453.83 188.96L457.57 192.69M455.70 187.53L455.70 194.13M457.57 188.96L453.83 192.69" stroke="#d95319" stroke-width="0.95" fill="none"/>
<path d="M452.40 401.52L459.00 401.52M453.83 399.65L457.57 403.39M455.70 398.22L455.70 404.82M457.57 399.65L453.83 403.39" stroke="#d95319" stroke-width="0.95" fill="none"/>
<path d="M473.11 199.71L479.71 199.71M474.54 197.84L478.28 201.58M476.41 196.41L476.41 203.01M478.28 197.84L474.54 201.58" stroke="#d95319" stroke-width="0.95" fill="none"/>
<path d="M473.11 414.96L479.71 414.96M474.54 413.09L478.28 416.82M476.41 411.66L476.41 418.26M478.28 413.09L474.54 416.82" stroke="#d95319" stroke-width="0.95" fill="none"/>
<path d="M493.82 209.47L500.42 209.47M495.25 207.61L498.99 211.34M497.12 206.17L497.12 212.77M498.99 207.61L495.25 211.34" stroke="#d95319" stroke-width="0.95" fill="none"/>
<path d="M493.82 424.28L500.42 424.28M495.25 422.41L498.99 426.15M497.12 420.98L497.12 427.58M498.99 422.41L495.25 426.15" stroke="#d95319" stroke-width="0.95" fill="none"/>
<path d="M514.53 219.64L521.13 219.64M515.96 217.78L519.69 221.51M517.83 216.34L517.83 222.94M519.69 217.78L515.96 221.51" stroke="#d95319" stroke-width="0.95" fill="none"/>
<path d="M514.53 430.34L521.13 430.34M515.96 428.47L519.69 432.21M517.83 427.04L517.83 433.64M519.69 428.47L515.96 432.21" stroke="#d95319" stroke-width="0.95" fill="none"/>
<path d="M535.24 229.98L541.84 229.98M536.67 228.11L540.40 231.85M538.54 226.68L538.54 233.28M540.40 228.11L536.67 231.85" stroke="#d95319" stroke-width="0.95" fill="none"/>
<path d="M535.24 434.16L541.84 434.16M536.67 432.29L540.40 436.03M538.54 430.86L538.54 437.46M540.40 432.29L536.67 436.03" stroke="#d95319" stroke-width="0.95" fill="none"/>
<path d="M362.5 148.5v4M362.5 298.5v-4M461.5 148.5v4M461.5 298.5v-4M560.5 148.5v4M560.5 298.5v-4M362.5 308.5v4M362.5 441.0v-4M461.5 308.5v4M461.5 441.0v-4M560.5 308.5v4M560.5 441.0v-4M263.5 173.60h4M659.5 173.60h-4M263.5 199.00h4M659.5 199.00h-4M263.5 224.00h4M659.5 224.00h-4M263.5 248.90h4M659.5 248.90h-4M263.5 273.90h4M659.5 273.90h-4M263.5 309.40h4M659.5 309.40h-4M263.5 342.30h4M659.5 342.30h-4M263.5 375.30h4M659.5 375.30h-4M263.5 407.40h4M659.5 407.40h-4M263.5 440.50h4M659.5 440.50h-4" stroke="#7c7c7c" stroke-width="1" fill="none"/>
<path d="M293.5 148.5v2M293.5 298.5v-2M310.5 148.5v2M310.5 298.5v-2M323.5 148.5v2M323.5 298.5v-2M332.5 148.5v2M332.5 298.5v-2M340.5 148.5v2M340.5 298.5v-2M347.5 148.5v2M347.5 298.5v-2M352.5 148.5v2M352.5 298.5v-2M357.5 148.5v2M357.5 298.5v-2M392.5 148.5v2M392.5 298.5v-2M409.5 148.5v2M409.5 298.5v-2M422.5 148.5v2M422.5 298.5v-2M431.5 148.5v2M431.5 298.5v-2M439.5 148.5v2M439.5 298.5v-2M446.5 148.5v2M446.5 298.5v-2M451.5 148.5v2M451.5 298.5v-2M456.5 148.5v2M456.5 298.5v-2M491.5 148.5v2M491.5 298.5v-2M508.5 148.5v2M508.5 298.5v-2M521.5 148.5v2M521.5 298.5v-2M530.5 148.5v2M530.5 298.5v-2M538.5 148.5v2M538.5 298.5v-2M545.5 148.5v2M545.5 298.5v-2M550.5 148.5v2M550.5 298.5v-2M555.5 148.5v2M555.5 298.5v-2M590.5 148.5v2M590.5 298.5v-2M607.5 148.5v2M607.5 298.5v-2M620.5 148.5v2M620.5 298.5v-2M629.5 148.5v2M629.5 298.5v-2M637.5 148.5v2M637.5 298.5v-2M644.5 148.5v2M644.5 298.5v-2M649.5 148.5v2M649.5 298.5v-2M654.5 148.5v2M654.5 298.5v-2M293.5 308.5v2M293.5 441.0v-2M310.5 308.5v2M310.5 441.0v-2M323.5 308.5v2M323.5 441.0v-2M332.5 308.5v2M332.5 441.0v-2M340.5 308.5v2M340.5 441.0v-2M347.5 308.5v2M347.5 441.0v-2M352.5 308.5v2M352.5 441.0v-2M357.5 308.5v2M357.5 441.0v-2M392.5 308.5v2M392.5 441.0v-2M409.5 308.5v2M409.5 441.0v-2M422.5 308.5v2M422.5 441.0v-2M431.5 308.5v2M431.5 441.0v-2M439.5 308.5v2M439.5 441.0v-2M446.5 308.5v2M446.5 441.0v-2M451.5 308.5v2M451.5 441.0v-2M456.5 308.5v2M456.5 441.0v-2M491.5 308.5v2M491.5 441.0v-2M508.5 308.5v2M508.5 441.0v-2M521.5 308.5v2M521.5 441.0v-2M530.5 308.5v2M530.5 441.0v-2M538.5 308.5v2M538.5 441.0v-2M545.5 308.5v2M545.5 441.0v-2M550.5 308.5v2M550.5 441.0v-2M555.5 308.5v2M555.5 441.0v-2M590.5 308.5v2M590.5 441.0v-2M607.5 308.5v2M607.5 441.0v-2M620.5 308.5v2M620.5 441.0v-2M629.5 308.5v2M629.5 441.0v-2M637.5 308.5v2M637.5 441.0v-2M644.5 308.5v2M644.5 441.0v-2M649.5 308.5v2M649.5 441.0v-2M654.5 308.5v2M654.5 441.0v-2" stroke="#a6a6a6" stroke-width="1" fill="none" shape-rendering="crispEdges"/>
<rect x="263.5" y="148.5" width="396.0" height="150.0" fill="none" stroke="#646464" stroke-width="1" shape-rendering="crispEdges"/>
<path d="M263.5 308.0V441.5M659.5 308.0V441.5M263.5 308.5H659.5" fill="none" stroke="#646464" stroke-width="1" shape-rendering="crispEdges"/>
<path d="M263.0 441.0H660.0" fill="none" stroke="#646464" stroke-width="1"/>
<text x="258.7" y="153" font-size="9.3" fill="#707070" text-anchor="end">20</text>
<text x="258.7" y="178" font-size="9.3" fill="#707070" text-anchor="end">0</text>
<text x="258.7" y="203" font-size="9.3" fill="#707070" text-anchor="end">-20</text>
<text x="258.7" y="228" font-size="9.3" fill="#707070" text-anchor="end">-40</text>
<text x="258.7" y="253" font-size="9.3" fill="#707070" text-anchor="end">-60</text>
<text x="258.7" y="278" font-size="9.3" fill="#707070" text-anchor="end">-80</text>
<text x="258.7" y="303" font-size="9.3" fill="#707070" text-anchor="end">-100</text>
<text x="258.7" y="314" font-size="9.3" fill="#707070" text-anchor="end">0</text>
<text x="258.7" y="346" font-size="9.3" fill="#707070" text-anchor="end">-45</text>
<text x="258.7" y="379" font-size="9.3" fill="#707070" text-anchor="end">-90</text>
<text x="258.7" y="412" font-size="9.3" fill="#707070" text-anchor="end">-135</text>
<text x="258.7" y="445" font-size="9.3" fill="#707070" text-anchor="end">-180</text>
<text x="263.7" y="457.6" font-size="9.3" fill="#707070" text-anchor="middle">10<tspan dy="-4.2" font-size="7.8">-1</tspan></text>
<text x="362.7" y="457.6" font-size="9.3" fill="#707070" text-anchor="middle">10<tspan dy="-4.2" font-size="7.8">0</tspan></text>
<text x="461.7" y="457.6" font-size="9.3" fill="#707070" text-anchor="middle">10<tspan dy="-4.2" font-size="7.8">1</tspan></text>
<text x="560.7" y="457.6" font-size="9.3" fill="#707070" text-anchor="middle">10<tspan dy="-4.2" font-size="7.8">2</tspan></text>
<text x="659.7" y="457.6" font-size="9.3" fill="#707070" text-anchor="middle">10<tspan dy="-4.2" font-size="7.8">3</tspan></text>
<text x="460.8" y="128.7" font-size="11.3" font-weight="bold" fill="#000" text-anchor="middle" textLength="73.6" lengthAdjust="spacingAndGlyphs">Bode Diagram</text>
<text x="461.4" y="143.7" font-size="9.9" fill="#707070" text-anchor="middle" textLength="132.3" lengthAdjust="spacingAndGlyphs" xml:space="preserve">From: Compensator  To: Gain</text>
<text x="461" y="470" font-size="11" fill="#000" text-anchor="middle" textLength="90" lengthAdjust="spacingAndGlyphs" xml:space="preserve">Frequency  (rad/s)</text>
<text transform="translate(232.7 223.4) rotate(-90)" font-size="11" fill="#000" text-anchor="middle">Magnitude (dB)</text>
<text transform="translate(232.7 374.3) rotate(-90)" font-size="11" fill="#000" text-anchor="middle">Phase (deg)</text>
<rect x="582.5" y="155.5" width="69" height="27" fill="#fff" stroke="#333" stroke-width="1" shape-rendering="crispEdges"/>
<path d="M585.6 162.4H615" stroke="#1583d0" stroke-width="0.9" opacity="0.85"/>
<path d="M586 175.4H615" stroke="#d95319" stroke-width="0.9" stroke-dasharray="1 2.2"/>
<path d="M582.70 175.40L589.30 175.40M584.13 173.53L587.87 177.27M586.00 172.10L586.00 178.70M587.87 173.53L584.13 177.27" stroke="#d95319" stroke-width="0.95" fill="none"/>
<path d="M611.70 175.40L618.30 175.40M613.13 173.53L616.87 177.27M615.00 172.10L615.00 178.70M616.87 173.53L613.13 177.27" stroke="#d95319" stroke-width="0.95" fill="none"/>
<text x="618" y="166.3" font-size="9.3" fill="#000">linsys1</text>
<text x="617.6" y="179" font-size="9.3" fill="#000">estsys1</text>
</svg>
<div id="labels">
<span class="t" id="t0" style="left:25.00px;top:7.00px;font-size:9.00px;line-height:9.00px;color:#ffffff;-webkit-text-stroke:0;transform:scaleX(0.8218);">LINEAR ANALYSIS</span>
<span class="t" id="t1" style="left:137.60px;top:7.00px;font-size:9.00px;line-height:9.00px;color:#2a2a2a;transform:scaleX(0.8722);">ESTIMATION</span>
<span class="t" id="t2" style="left:233.50px;top:7.00px;font-size:9.00px;line-height:9.00px;color:#ffffff;-webkit-text-stroke:0;transform:scaleX(0.8417);">PLOTS AND RESULTS</span>
<span class="t" id="t3" style="left:360.00px;top:7.00px;font-size:9.00px;line-height:9.00px;color:#ffffff;-webkit-text-stroke:0;transform:scaleX(0.8495);">BODE PLOT 1</span>
<span class="t" id="t4" style="left:458.50px;top:7.00px;font-size:9.00px;line-height:9.00px;color:#ffffff;-webkit-text-stroke:0;transform:scaleX(0.8907);">VIEW</span>
<span class="t" id="t5" style="left:19.40px;top:28.00px;font-size:9.20px;line-height:9.20px;color:#15101a;transform:scaleX(0.9629);">Input Signal:</span>
<span class="t" id="t6" style="left:16.00px;top:44.00px;font-size:9.20px;line-height:9.20px;color:#15101a;transform:scaleX(0.9364);">Analysis I/Os:</span>
<span class="t" id="t7" style="left:4.00px;top:61.00px;font-size:9.20px;line-height:9.20px;color:#15101a;transform:scaleX(0.9728);">Operating Point:</span>
<span class="t" id="t8" style="left:89.40px;top:28.00px;font-size:9.20px;line-height:9.20px;color:#15101a;transform:scaleX(0.9114);">in_sine1</span>
<span class="t" id="t9" style="left:74.60px;top:44.00px;font-size:9.20px;line-height:9.20px;color:#15101a;transform:scaleX(0.9905);">Model I/Os</span>
<span class="t" id="t10" style="left:74.60px;top:61.00px;font-size:9.20px;line-height:9.20px;color:#15101a;transform:scaleX(1.0066);">Model Initial Condition</span>
<span class="t" id="t11" style="left:76.60px;top:79.00px;font-size:7.80px;line-height:7.80px;color:#606060;transform:scaleX(0.9385);">SETUP</span>
<span class="t" id="t12" style="left:199.00px;top:26.00px;font-size:9.20px;line-height:9.20px;color:#15101a;transform:scaleX(0.9272);">Result Viewer</span>
<span class="t" id="t13" style="left:199.00px;top:42.00px;font-size:9.20px;line-height:9.20px;color:#15101a;transform:scaleX(0.9540);">Diagnostic Viewer</span>
<span class="t" id="t14" style="left:200.60px;top:59.00px;font-size:9.20px;line-height:9.20px;color:#15101a;transform:scaleX(0.9863);">More Options</span>
<span class="t" id="t15" style="left:207.60px;top:79.00px;font-size:7.80px;line-height:7.80px;color:#606060;transform:scaleX(0.9802);">OPTIONS</span>
<span class="t" id="t16" style="left:284.80px;top:60.00px;font-size:8.80px;line-height:8.80px;color:#15101a;transform:scaleX(0.9410);">Bode Plot 1</span>
<span class="t" id="t17" style="left:348.00px;top:60.00px;font-size:8.80px;line-height:8.80px;color:#15101a;transform:scaleX(0.9052);">Bode</span>
<span class="t" id="t18" style="left:394.60px;top:60.00px;font-size:8.80px;line-height:8.80px;color:#15101a;transform:scaleX(0.9638);">Nichols</span>
<span class="t" id="t19" style="left:445.60px;top:60.00px;font-size:8.80px;line-height:8.80px;color:#15101a;transform:scaleX(0.9678);">Nyquist</span>
<span class="t" id="t20" style="left:490.60px;top:60.00px;font-size:8.80px;line-height:8.80px;color:#15101a;transform:scaleX(0.9605);">Singular ...</span>
<span class="t" id="t21" style="left:396.60px;top:79.00px;font-size:7.80px;line-height:7.80px;color:#606060;transform:scaleX(0.9630);">ESTIMATE</span>
<span class="t" id="t22" style="left:6.30px;top:93.00px;font-size:9.20px;line-height:9.20px;color:#15101a;transform:scaleX(0.9235);">Data Browser</span>
<span class="t" id="t23" style="left:5.60px;top:109.00px;font-size:9.20px;line-height:9.20px;color:#8c8c8c;-webkit-text-stroke:0;transform:scaleX(0.9312);">Search workspace variables</span>
<span class="t" id="t24" style="left:16.90px;top:127.00px;font-size:9.20px;line-height:9.20px;color:#15101a;transform:scaleX(0.9488);">MATLAB Workspace</span>
<span class="t" id="t25" style="left:6.80px;top:148.00px;font-size:9.20px;line-height:9.20px;color:#15101a;transform:scaleX(0.9749);">Name</span>
<span class="t" id="t26" style="left:104.20px;top:148.00px;font-size:9.20px;line-height:9.20px;color:#15101a;transform:scaleX(0.9550);">Value</span>
<span class="t" id="t27" style="left:16.50px;top:164.00px;font-size:9.20px;line-height:9.20px;color:#15101a;transform:scaleX(0.8707);">sys</span>
<span class="t" id="t28" style="left:103.00px;top:164.00px;font-size:9.20px;line-height:9.20px;color:#15101a;transform:scaleX(0.9568);">'scdDCMo...</span>
<span class="t" id="t29" style="left:16.60px;top:250.00px;font-size:9.20px;line-height:9.20px;color:#15101a;transform:scaleX(0.9461);">Linear Analysis Workspace</span>
<span class="t" id="t30" style="left:6.80px;top:271.00px;font-size:9.20px;line-height:9.20px;color:#15101a;transform:scaleX(0.9749);">Name</span>
<span class="t" id="t31" style="left:104.20px;top:271.00px;font-size:9.20px;line-height:9.20px;color:#15101a;transform:scaleX(0.9550);">Value</span>
<span class="t" id="t32" style="left:17.60px;top:287.00px;font-size:9.20px;line-height:9.20px;color:#15101a;transform:scaleX(0.8634);">estsys1</span>
<span class="t" id="t33" style="left:103.50px;top:287.00px;font-size:9.20px;line-height:9.20px;color:#15101a;transform:scaleX(0.9148);">1x1 frd</span>
<span class="t" id="t34" style="left:17.60px;top:300.00px;font-size:9.20px;line-height:9.20px;color:#15101a;transform:scaleX(0.8880);">in_sine1</span>
<span class="t" id="t35" style="left:103.50px;top:300.00px;font-size:9.20px;line-height:9.20px;color:#15101a;transform:scaleX(0.8998);">1x1 Sinestr...</span>
<span class="t" id="t36" style="left:17.60px;top:312.00px;font-size:9.20px;line-height:9.20px;color:#15101a;transform:scaleX(0.8863);">linsys1</span>
<span class="t" id="t37" style="left:103.50px;top:312.00px;font-size:9.20px;line-height:9.20px;color:#15101a;transform:scaleX(0.8471);">1x1 ss</span>
<span class="t" id="t38" style="left:16.20px;top:371.00px;font-size:9.20px;line-height:9.20px;color:#15101a;transform:scaleX(0.9492);">Variable Preview</span>
<span class="t" id="t39" style="left:209.60px;top:92.00px;font-size:9.20px;line-height:9.20px;color:#15101a;transform:scaleX(0.9323);">Bode Plot 1</span>
<span class="t" id="t40" style="left:405.80px;top:490.00px;font-size:9.20px;line-height:9.20px;color:#15101a;transform:scaleX(0.9502);">The estimation result "estsys1" is created in the Linear Analysis Workspace.</span>
</div>
</div></body></html>
